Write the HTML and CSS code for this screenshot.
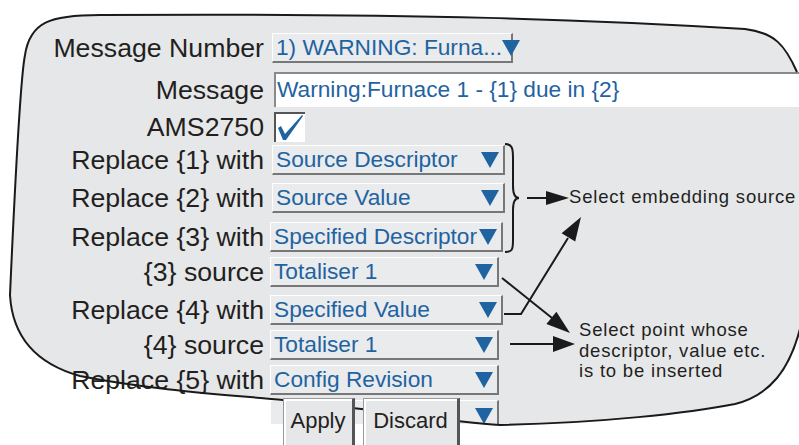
FILE: index.html
```html
<!DOCTYPE html>
<html lang="en">
<head>
    <meta charset="UTF-8">
    <meta name="viewport" content="width=device-width, initial-scale=1.0">
    <title>Message Configuration</title>
    <link rel="stylesheet" href="styles.css">
</head>
<body>
    <div class="figure">
        <!-- grey panel shape -->
        <svg class="panel-bg" viewBox="0 0 799 445">
            <path class="panel-fill" d="M797 72 C785 45 775 33 745 29 C600 20 420 13 100 15 C50 15 30 22 25 55 C20 80 12 250 10 295 C12 330 30 362 80 376 C150 390 230 395 283 400 C380 410 450 422 500 425 C600 423 690 413 735 404 C770 395 790 370 801 325 L815 325 L815 72 Z"/>
        </svg>

        <div class="form">
            <div class="row">
                <span class="label">Message Number</span>
                <div class="dd first"><span>1) WARNING: Furna...</span><i class="arrow"></i></div>
            </div>
            <div class="row">
                <span class="label">Message</span>
                <div class="field">Warning:Furnace 1 - {1} due in {2}</div>
            </div>
            <div class="row">
                <span class="label">AMS2750</span>
                <div class="check">
                    <svg width="29" height="28" viewBox="0 0 29 28"><polygon points="2,14 5,12 9,20 26,1 27,2 10,26 7,26"/></svg>
                </div>
            </div>
            <div class="row">
                <span class="label">Replace {1} with</span>
                <div class="dd wide"><span>Source Descriptor</span><i class="arrow"></i></div>
            </div>
            <div class="row">
                <span class="label">Replace {2} with</span>
                <div class="dd wide"><span>Source Value</span><i class="arrow"></i></div>
            </div>
            <div class="row">
                <span class="label">Replace {3} with</span>
                <div class="dd mid"><span>Specified Descriptor</span><i class="arrow"></i></div>
            </div>
            <div class="row">
                <span class="label">{3} source</span>
                <div class="dd"><span>Totaliser 1</span><i class="arrow"></i></div>
            </div>
            <div class="row">
                <span class="label">Replace {4} with</span>
                <div class="dd mid"><span>Specified Value</span><i class="arrow"></i></div>
            </div>
            <div class="row">
                <span class="label">{4} source</span>
                <div class="dd"><span>Totaliser 1</span><i class="arrow"></i></div>
            </div>
            <div class="row">
                <span class="label">Replace {5} with</span>
                <div class="dd"><span>Config Revision</span><i class="arrow"></i></div>
            </div>
            <div class="row">
                <span class="label"></span>
                <div class="dd cut"><span></span><i class="arrow"></i></div>
            </div>
        </div>

        <!-- outline, brace and pointer arrows -->
        <svg class="overlay" viewBox="0 0 799 445">
            <path class="outline" d="M797 72 C785 45 775 33 745 29 C600 20 420 13 100 15 C50 15 30 22 25 55 C20 80 12 250 10 295 C12 330 30 362 80 376 C150 390 230 395 283 400 C380 410 450 422 500 425 C600 423 690 413 735 404 C770 395 790 370 801 325"/>
            <path class="outline" d="M505 144 C512 144 513 148 513 158 L513 186 C513 194 515 198 519 198 C515 198 513 202 513 210 L513 240 C513 250 512 252 505 252"/>
            <path class="outline" d="M527 198 L548 198"/>
            <polygon class="head" points="546,191 569,198 546,205"/>
            <path class="outline" d="M502 278 L552 318"/>
            <polygon class="head" points="546.4,324.1 570,333 556.4,311.7"/>
            <path class="outline" d="M504 314 L521 314 L568 238"/>
            <polygon class="head" points="575.2,241.6 581,217 561.6,233.2"/>
            <path class="outline" d="M510 344 L556 344"/>
            <polygon class="head" points="553,336 575,344 553,352"/>
        </svg>

        <p class="note note-source">Select embedding source</p>
        <p class="note note-point">Select point whose<br>descriptor, value etc.<br>is to be inserted</p>

        <div class="buttons">
            <button class="btn apply">Apply</button>
            <button class="btn discard">Discard</button>
        </div>
    </div>
</body>
</html>
```

FILE: styles.css
```css
body {
    margin: 0;
    padding: 0;
    background-color: #ffffff;
    font-family: "Liberation Sans", Arial, sans-serif;
    overflow: hidden;
}

.figure {
    position: relative;
    width: 799px;
    height: 445px;
    overflow: hidden;
}

.panel-bg,
.overlay {
    position: absolute;
    left: 0;
    top: 0;
    width: 799px;
    height: 445px;
}

.panel-bg {
    z-index: 0;
}

.panel-fill {
    fill: #e6e7e9;
}

.overlay {
    z-index: 2;
    pointer-events: none;
}

.outline {
    fill: none;
    stroke: #1a1a1a;
    stroke-width: 2;
}

.head {
    fill: #1a1a1a;
}

.form {
    position: relative;
    z-index: 1;
    padding-top: 33px;
    display: grid;
    grid-template-rows: 39px 40px 33px 38px 39px 35px 38px 35px 35px 35px 30px;
}

.row {
    display: flex;
    align-items: center;
    align-self: start;
}

.label {
    width: 264px;
    margin-right: 6px;
    text-align: right;
    font-size: 26.7px;
    line-height: 30px;
    color: #231f20;
    white-space: nowrap;
}

.dd {
    box-sizing: border-box;
    width: 229px;
    height: 30px;
    display: flex;
    align-items: center;
    justify-content: space-between;
    padding: 0 4px 0 3px;
    background-color: #eaebed;
    border-top: 1px solid #ffffff;
    border-left: 1px solid #ffffff;
    border-right: 2px solid #777777;
    border-bottom: 2px solid #777777;
    color: #1f63a1;
    font-size: 22.7px;
    line-height: 27px;
    white-space: nowrap;
}

.dd.first {
    width: 241px;
    margin-left: 2px;
    padding-right: 0;
}

.dd.wide {
    width: 233px;
    margin-left: 2px;
}

.dd.mid {
    width: 233px;
}

.dd.mid span {
    margin-right: -4px;
}

.dd.cut {
    height: 24px;
    border-bottom: none;
    align-items: flex-start;
    padding-top: 7px;
}

.arrow {
    width: 0;
    height: 0;
    border-left: 9px solid transparent;
    border-right: 9px solid transparent;
    border-top: 16px solid #1f63a1;
}

.field {
    box-sizing: border-box;
    margin-left: 4px;
    width: 530px;
    height: 35px;
    padding: 0 0 2px 1px;
    background-color: #ffffff;
    border-top: 2px solid #8a8a8a;
    border-left: 2px solid #8a8a8a;
    color: #1f63a1;
    font-size: 22.7px;
    line-height: 31px;
    white-space: nowrap;
}

.check {
    box-sizing: border-box;
    margin-left: 4px;
    width: 31px;
    height: 30px;
    background-color: #ffffff;
    border-top: 2px solid #555555;
    border-left: 2px solid #555555;
}

.check svg {
    display: block;
    fill: #1f63a1;
}

.note {
    position: absolute;
    z-index: 2;
    margin: 0;
    font-size: 18.5px;
    letter-spacing: 0.8px;
    line-height: 22px;
    color: #231f20;
    white-space: nowrap;
}

.note-source {
    left: 569px;
    top: 186px;
}

.note-point {
    left: 579px;
    top: 320px;
    line-height: 20.5px;
}

.buttons {
    position: absolute;
    left: 283px;
    top: 398px;
    z-index: 3;
    display: flex;
    gap: 8px;
}

.btn {
    display: block;
    box-sizing: border-box;
    margin: 0;
    padding: 9px 0 16px;
    background-color: #e6e7e9;
    border-top: 1px solid #999999;
    border-left: 1px solid #999999;
    border-right: 3px solid #555555;
    border-bottom: 3px solid #555555;
    box-shadow: inset 2px 2px 0 #ffffff;
    font-family: "Liberation Sans", Arial, sans-serif;
    font-size: 22px;
    line-height: 26px;
    color: #231f20;
    text-align: center;
}

.btn.apply {
    width: 72px;
}

.btn.discard {
    width: 97px;
}
```
